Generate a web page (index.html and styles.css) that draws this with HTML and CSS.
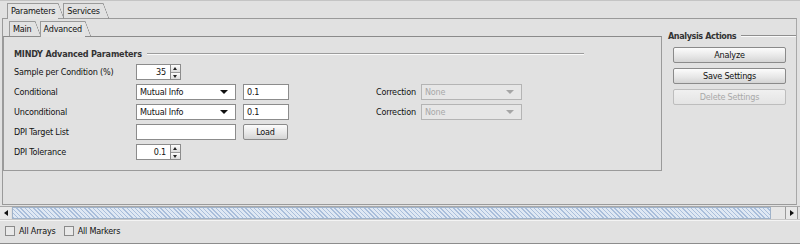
FILE: index.html
```html
<!DOCTYPE html>
<html lang="en">
<head>
    <meta charset="UTF-8">
    <title>MINDY Parameters</title>
    <link rel="stylesheet" href="styles.css">
</head>
<body>
    <div class="frame">
        <div class="tabs outer-tabs">
            <div class="tab active">Parameters</div>
            <div class="tab">Services</div>
        </div>

        <div class="pane">
            <div class="subpane">
                <div class="tabs inner-tabs">
                    <div class="tab">Main</div>
                    <div class="tab active">Advanced</div>
                </div>
                <div class="subbody">
                    <div class="group-title">
                        <span>MINDY Advanced Parameters</span>
                        <i class="rule"></i>
                    </div>

                    <div class="form">
                        <div class="row">
                            <label class="lbl">Sample per Condition (%)</label>
                            <div class="spinner">
                                <span class="spin-field">35</span>
                                <span class="spin-btns"><b class="up"></b><b class="down"></b></span>
                            </div>
                        </div>
                        <div class="row">
                            <label class="lbl">Conditional</label>
                            <div class="combo"><span>Mutual Info</span><b class="arrow"></b></div>
                            <div class="field">0.1</div>
                            <label class="lbl-corr">Correction</label>
                            <div class="combo disabled"><span>None</span><b class="arrow"></b></div>
                        </div>
                        <div class="row">
                            <label class="lbl">Unconditional</label>
                            <div class="combo"><span>Mutual Info</span><b class="arrow"></b></div>
                            <div class="field">0.1</div>
                            <label class="lbl-corr">Correction</label>
                            <div class="combo disabled"><span>None</span><b class="arrow"></b></div>
                        </div>
                        <div class="row">
                            <label class="lbl">DPI Target List</label>
                            <div class="field wide"></div>
                            <button class="btn small">Load</button>
                        </div>
                        <div class="row">
                            <label class="lbl">DPI Tolerance</label>
                            <div class="spinner">
                                <span class="spin-field">0.1</span>
                                <span class="spin-btns"><b class="up"></b><b class="down"></b></span>
                            </div>
                        </div>
                    </div>
                </div>
            </div>

            <div class="actions">
                <div class="group-title">
                    <span>Analysis Actions</span>
                    <i class="rule"></i>
                </div>
                <button class="btn">Analyze</button>
                <button class="btn">Save Settings</button>
                <button class="btn" disabled>Delete Settings</button>
            </div>
        </div>

        <div class="hscroll">
            <div class="arrow-btn left"><b></b></div>
            <div class="thumb"></div>
            <div class="track-end"></div>
            <div class="arrow-btn right"><b></b></div>
        </div>

        <div class="footer">
            <label class="check"><span class="box"></span>All Arrays</label>
            <label class="check"><span class="box"></span>All Markers</label>
        </div>
    </div>
</body>
</html>
```

FILE: styles.css
```css
* {
    box-sizing: border-box;
}

body {
    margin: 0;
    background-color: #e1e1e1;
    font-family: "DejaVu Sans Condensed", "DejaVu Sans", sans-serif;
    font-stretch: condensed;
    font-size: 9px;
    letter-spacing: -0.2px;
    color: #111;
}

.frame {
    width: 800px;
    height: 244px;
    display: flex;
    flex-direction: column;
    border-top: 1px solid #c4c4c4;
}

/* tab strips */
.tabs {
    display: flex;
    align-items: flex-end;
}

.outer-tabs {
    height: 17px;
    padding-left: 5px;
    margin-left: 2px;
}

.inner-tabs {
    height: 17px;
    padding-left: 6px;
}

.tab {
    position: relative;
    height: 15px;
    line-height: 14px;
    padding: 0 3px;
    margin-right: 5px;
    border-left: 1px solid #9a9a9a;
    border-top: 1px solid #9a9a9a;
}

.tab::after {
    content: "";
    position: absolute;
    top: -1px;
    right: -6px;
    width: 6px;
    height: 16px;
    background: linear-gradient(to top right, transparent calc(50% - 0.6px), #8f8f8f, transparent calc(50% + 0.6px));
}

.tab.active {
    background-color: #e4e4e4;
    height: 16px;
    margin-bottom: -1px;
    z-index: 1;
}

/* outer pane */
.pane {
    height: 187px;
    margin: 0 3px 0 2px;
    border: 1px solid #9a9a9a;
    border-right-color: #a8a8a8;
    display: flex;
}

.subpane {
    width: 659px;
}

.subbody {
    height: 135px;
    border: 1px solid #9a9a9a;
    border-top-color: #8a8a8a;
    padding: 11px 0 0 10px;
}

.group-title {
    display: flex;
    align-items: center;
    height: 12px;
    font-weight: bold;
    color: #333;
}

.subbody .group-title {
    width: 570px;
}

.actions .group-title {
    letter-spacing: -0.4px;
}

.rule {
    display: block;
    flex: 1;
    height: 2px;
    margin-left: 5px;
    border-top: 1px solid #9c9c9c;
    border-bottom: 1px solid #fafafa;
}

.actions .rule {
    min-width: 40px;
    border-top-color: #8e8e8e;
}

.form {
    display: flex;
    flex-direction: column;
    gap: 4px;
    margin-top: 4px;
}

.row {
    display: flex;
    align-items: center;
    height: 16px;
}

.lbl {
    width: 122px;
}

.lbl-corr {
    margin-left: 87px;
    width: 45px;
}

/* inputs */
.field,
.spin-field,
.combo {
    height: 16px;
    line-height: 14px;
    background-color: #fff;
    border: 1px solid #8c8c8c;
}

.field {
    width: 46px;
    margin-left: 7px;
    padding-left: 3px;
}

.field.wide {
    width: 100px;
    margin-left: 0;
}

.spinner {
    display: flex;
    height: 16px;
}

.spin-field {
    width: 35px;
    text-align: right;
    padding-right: 4px;
}

.spin-btns {
    display: flex;
    flex-direction: column;
    width: 10px;
    border: 1px solid #8c8c8c;
    border-left: none;
}

.spin-btns b {
    flex: 1;
    position: relative;
    background: linear-gradient(#fdfdfd, #dcdcdc);
}

.spin-btns b + b {
    border-top: 1px solid #9a9a9a;
}

.spin-btns b::after {
    content: "";
    position: absolute;
    left: 2px;
    top: 2px;
    border-left: 2.5px solid transparent;
    border-right: 2.5px solid transparent;
}

.spin-btns .up::after {
    border-bottom: 3px solid #222;
}

.spin-btns .down::after {
    border-top: 3px solid #222;
}

.combo {
    width: 100px;
    display: flex;
    align-items: center;
    justify-content: space-between;
    padding: 0 7px 0 3px;
}

.combo .arrow {
    border-left: 4px solid transparent;
    border-right: 4px solid transparent;
    border-top: 4px solid #111;
}

.combo.disabled {
    width: 101px;
    background-color: #e6e6e6;
    border-color: #b4b4b4;
    color: #a8a8a8;
}

.combo.disabled .arrow {
    border-top-color: #a5a5a5;
}

/* buttons */
.btn {
    display: block;
    width: 113px;
    height: 16px;
    padding: 0;
    font: inherit;
    letter-spacing: inherit;
    color: #111;
    border: 1px solid #8a8a8a;
    border-radius: 2px;
    background: linear-gradient(#fcfcfc, #e6e6e6 60%, #d4d4d4);
}

.btn:disabled {
    color: #a8a8a8;
    border-color: #bdbdbd;
    background: linear-gradient(#f0f0f0, #e4e4e4);
}

.btn.small {
    width: 45px;
    margin-left: 7px;
}

/* right column */
.actions {
    flex: 1;
    padding: 11px 0 0 6px;
}

.actions .btn {
    margin: 5px 0 0 5px;
}

/* scrollbar */
.hscroll {
    display: flex;
    height: 14px;
    margin-top: 1px;
    border-top: 1px solid #a8a8a8;
    border-bottom: 1px solid #c8c8c8;
}

.arrow-btn {
    width: 11px;
    display: flex;
    align-items: center;
    justify-content: center;
    background-color: #e8e8e8;
}

.arrow-btn b {
    border-top: 3.5px solid transparent;
    border-bottom: 3.5px solid transparent;
}

.arrow-btn.left b {
    border-right: 4px solid #111;
}

.arrow-btn.right {
    border-left: 1px solid #9a9a9a;
    border-right: 1px solid #9a9a9a;
    width: 13px;
    margin-right: 2px;
}

.arrow-btn.right b {
    border-left: 4px solid #111;
}

.thumb {
    width: 759px;
    margin-left: 1px;
    border: 1px solid #9fb2c9;
    background: repeating-linear-gradient(45deg, #a9bedb 0 1px, #dfe8f3 1px 3px);
}

.track-end {
    flex: 1;
    background-color: #e6e6e6;
}

/* footer */
.footer {
    display: flex;
    align-items: center;
    gap: 8px;
    height: 24px;
    padding: 0 5px 2px;
    border-top: 1px solid #f4f4f4;
    border-bottom: 1px solid #8c8c8c;
}

.check {
    display: flex;
    align-items: center;
    gap: 4px;
}

.check .box {
    width: 10px;
    height: 10px;
    border: 1px solid #8a8a8a;
    background-color: #e9e9e9;
}
```
